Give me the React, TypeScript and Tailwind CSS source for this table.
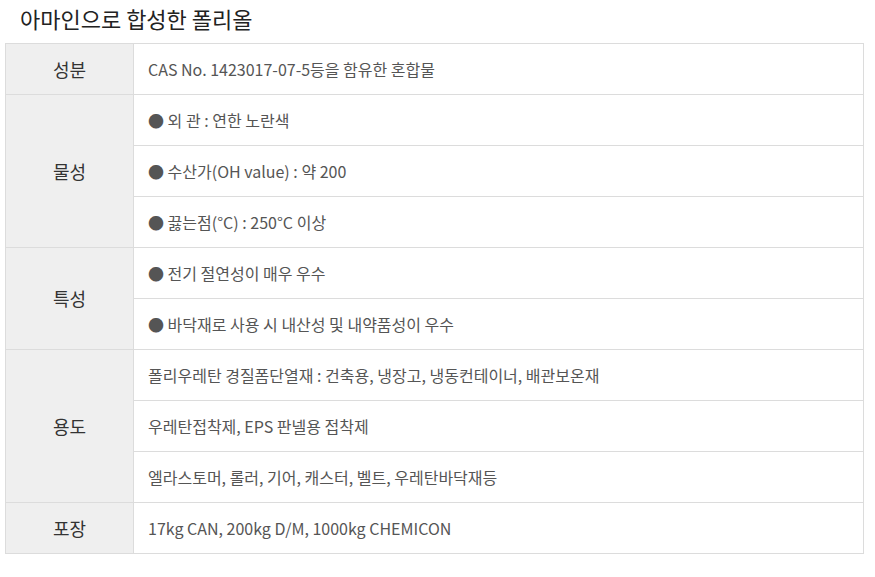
import React from 'react';

type Row = { label: string; items: string[] };

const rows: Row[] = [
  { label: '성분', items: ['CAS No. 1423017-07-5등을 함유한 혼합물'] },
  {
    label: '물성',
    items: ['● 외 관 : 연한 노란색', '● 수산가(OH value) : 약 200', '● 끓는점(°C) : 250°C 이상'],
  },
  { label: '특성', items: ['● 전기 절연성이 매우 우수', '● 바닥재로 사용 시 내산성 및 내약품성이 우수'] },
  {
    label: '용도',
    items: [
      '폴리우레탄 경질폼단열재 : 건축용, 냉장고, 냉동컨테이너, 배관보온재',
      '우레탄접착제, EPS 판넬용 접착제',
      '엘라스토머, 롤러, 기어, 캐스터, 벨트, 우레탄바닥재등',
    ],
  },
  { label: '포장', items: ['17kg CAN, 200kg D/M, 1000kg CHEMICON'] },
];

export default function App() {
  return (
    <div
      className="w-[875px] h-[577px] bg-white"
      style={{ fontFamily: '"Noto Sans CJK KR", "Noto Sans", sans-serif' }}
    >
      <h2 className="pl-[20px] pt-[3px] h-[43px] text-[22px] leading-[30px] text-[#222]">
        아마인으로 합성한 폴리올
      </h2>
      <table className="ml-[5px] w-[859px] border-collapse border border-[#dcdcdc]">
        <tbody>
          {rows.map((row) =>
            row.items.map((item, i) => (
              <tr key={row.label + i}>
                {i === 0 && (
                  <th
                    rowSpan={row.items.length}
                    className="w-[128px] border border-[#dcdcdc] bg-[#efefef] text-center text-[18px] font-normal text-[#333]"
                  >
                    {row.label}
                  </th>
                )}
                <td className="h-[51px] border border-[#dcdcdc] pl-[14px] text-[16px] text-[#555]">{item}</td>
              </tr>
            ))
          )}
        </tbody>
      </table>
    </div>
  );
}
